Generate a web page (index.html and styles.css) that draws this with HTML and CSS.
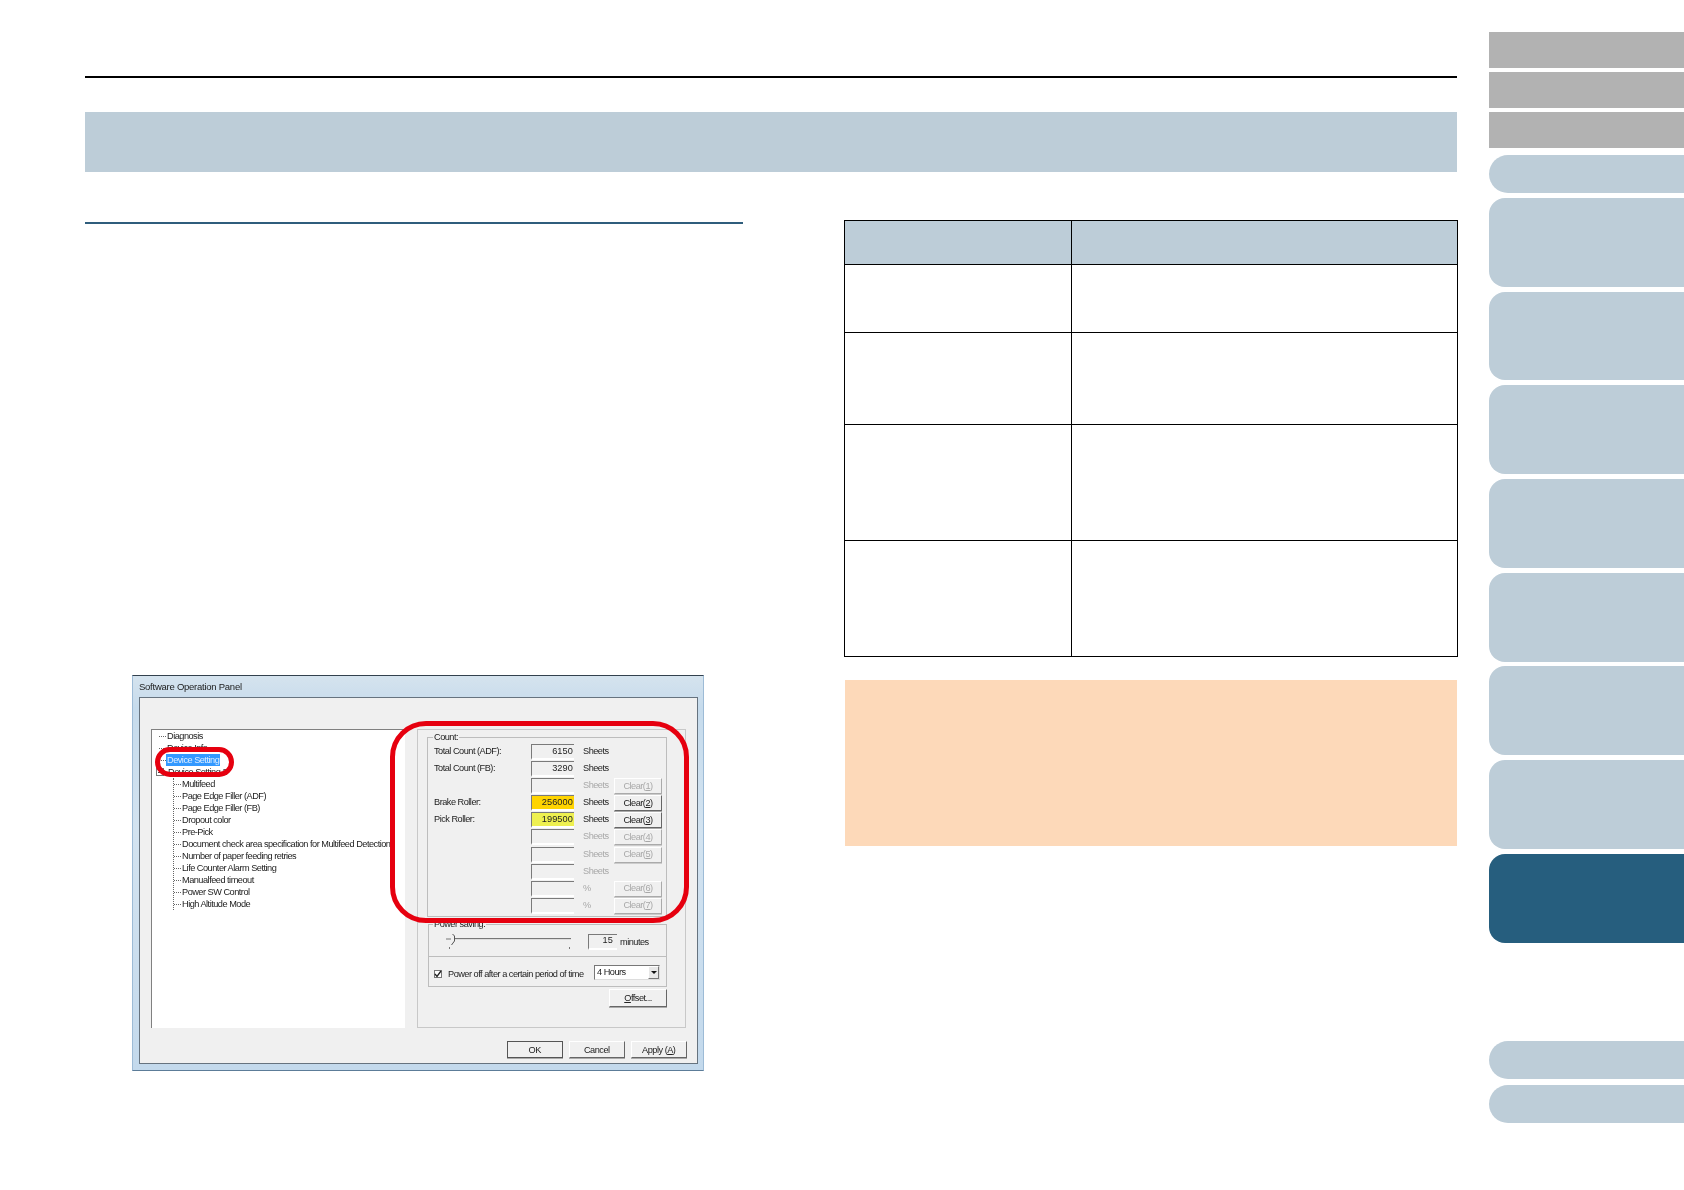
FILE: index.html
```html
<!DOCTYPE html>
<html lang="en">
<head>
<meta charset="utf-8">
<title>Software Operation Panel</title>
<link rel="stylesheet" href="styles.css">
</head>
<body>
<div class="page">
  <main class="main">
    <div class="top-rule"></div>
    <div class="band"></div>
    <div class="columns">
      <section class="left">
        <div class="sub-rule"></div>
        <div class="window">
          <div class="titlebar">Software Operation Panel</div>
          <div class="client">
            <div class="dialog-body">
              <div class="tree">
                <div class="row"><span class="stub"></span><span>Diagnosis</span></div>
                <div class="row"><span class="stub"></span><span>Device Info</span></div>
                <div class="row"><span class="stub"></span><span class="selected">Device Setting</span></div>
                <div class="row"><span class="expander"></span><span>Device Setting 2</span></div>
                <div class="subtree">
                  <div class="row"><span class="stub"></span><span>Multifeed</span></div>
                  <div class="row"><span class="stub"></span><span>Page Edge Filler (ADF)</span></div>
                  <div class="row"><span class="stub"></span><span>Page Edge Filler (FB)</span></div>
                  <div class="row"><span class="stub"></span><span>Dropout color</span></div>
                  <div class="row"><span class="stub"></span><span>Pre-Pick</span></div>
                  <div class="row"><span class="stub"></span><span>Document check area specification for Multifeed Detection</span></div>
                  <div class="row"><span class="stub"></span><span>Number of paper feeding retries</span></div>
                  <div class="row"><span class="stub"></span><span>Life Counter Alarm Setting</span></div>
                  <div class="row"><span class="stub"></span><span>Manualfeed timeout</span></div>
                  <div class="row"><span class="stub"></span><span>Power SW Control</span></div>
                  <div class="row"><span class="stub"></span><span>High Altitude Mode</span></div>
                </div>
              </div>
              <div class="panel">
                <fieldset class="group count">
                  <legend>Count:</legend>
                  <div class="count-grid">
                    <span>Total Count (ADF):</span><span class="field">6150</span><span>Sheets</span><span></span>
                    <span>Total Count (FB):</span><span class="field">3290</span><span>Sheets</span><span></span>
                    <span></span><span class="field"></span><span class="off">Sheets</span><button class="btn off">Clear(<u>1</u>)</button>
                    <span>Brake Roller:</span><span class="field amber">256000</span><span>Sheets</span><button class="btn">Clear(<u>2</u>)</button>
                    <span>Pick Roller:</span><span class="field lemon">199500</span><span>Sheets</span><button class="btn">Clear(<u>3</u>)</button>
                    <span></span><span class="field"></span><span class="off">Sheets</span><button class="btn off">Clear(<u>4</u>)</button>
                    <span></span><span class="field"></span><span class="off">Sheets</span><button class="btn off">Clear(<u>5</u>)</button>
                    <span></span><span class="field"></span><span class="off">Sheets</span><span></span>
                    <span></span><span class="field"></span><span class="off">%</span><button class="btn off">Clear(<u>6</u>)</button>
                    <span></span><span class="field"></span><span class="off">%</span><button class="btn off">Clear(<u>7</u>)</button>
                  </div>
                </fieldset>
                <fieldset class="group power">
                  <legend>Power saving:</legend>
                  <div class="power-row">
                    <svg class="slider" width="125" height="16" viewBox="0 0 125 16" aria-hidden="true">
                      <path d="M0 5h5" stroke="#777" fill="none"/>
                      <path d="M8 4.500h117" stroke="#777" fill="none"/>
                      <path d="M8 5.500h117" stroke="#ddd" fill="none"/>
                      <path d="M6.500 0l2 2v5l-3 4" stroke="#555" fill="none"/>
                      <path d="M3.500 13v2M123.500 13v2" stroke="#777" fill="none"/>
                    </svg>
                    <span class="field minutes-field">15</span>
                    <span>minutes</span>
                  </div>
                </fieldset>
                <div class="auto-off">
                  <span class="check">
                    <svg width="8" height="8" viewBox="0 0 8 8" aria-hidden="true"><path d="M1 4l2 2.500 4-5.500" stroke="#222" stroke-width="1.300" fill="none"/></svg>
                  </span>
                  <span class="auto-label">Power off after a certain period of time</span>
                  <span class="combo"><span>4 Hours</span><span class="combo-arrow"></span></span>
                </div>
                <button class="btn offset"><u>O</u>ffset...</button>
              </div>
            </div>
            <div class="footer">
              <button class="btn wide default">OK</button>
              <button class="btn wide">Cancel</button>
              <button class="btn wide">Apply (<u>A</u>)</button>
            </div>
          </div>
          <div class="mark mark-count"></div>
          <div class="mark mark-tree"></div>
        </div>
      </section>
      <section class="right">
        <table class="spec">
          <tr class="r-head"><th></th><th></th></tr>
          <tr class="r1"><td></td><td></td></tr>
          <tr class="r2"><td></td><td></td></tr>
          <tr class="r3"><td></td><td></td></tr>
          <tr class="r3"><td></td><td></td></tr>
        </table>
        <div class="note"></div>
      </section>
    </div>
  </main>
  <nav class="side">
    <div class="gray-tab"></div>
    <div class="gray-tab"></div>
    <div class="gray-tab"></div>
    <div class="tab short first"></div>
    <div class="tabs">
      <div class="tab"></div>
      <div class="tab"></div>
      <div class="tab"></div>
      <div class="tab"></div>
      <div class="tab"></div>
      <div class="tab"></div>
      <div class="tab"></div>
      <div class="tab active"></div>
    </div>
    <div class="bottom-tabs">
      <div class="tab short"></div>
      <div class="tab short"></div>
    </div>
  </nav>
</div>
</body>
</html>
```

FILE: styles.css
```css
* { box-sizing: border-box; }
html, body { margin: 0; padding: 0; background: #fff; }
.page { display: flex; width: 1684px; height: 1190px; overflow: hidden; padding-left: 85px; }
.main { width: 1372px; padding-top: 76px; flex: none; }
.top-rule { height: 2px; background: #000; }
.band { height: 60px; margin-top: 34px; background: #bdcdd8; }
.columns { display: flex; margin-top: 48px; gap: 101px; }
.left { width: 658px; padding-top: 2px; flex: none; }
.sub-rule { height: 2px; background: #2f5d7c; }
.right { width: 613px; flex: none; }

/* dialog */
.window {
  position: relative; width: 572px; height: 396px; margin: 451px 0 0 47px;
  padding: 0 5px 6px 6px; display: flex; flex-direction: column;
  background: linear-gradient(180deg, #d5e3ee 0, #c6dbec 8%, #d3e3f0 40%, #c3d9ec 100%);
  border: 1px solid #9dbbd6; border-top-color: #33414e; border-bottom-color: #5c7c98;
  font: 9.2px/12px "Liberation Sans", Arial, sans-serif; letter-spacing: -.5px; color: #222;
  filter: blur(.35px);
}
.titlebar { height: 21px; flex: none; font-size: 9.5px; line-height: 22px; letter-spacing: -.25px; color: #1c1c1c; }
.client {
  flex: 1; min-height: 0; background: #f0f0f0; border: 1px solid #66737f;
  padding: 31px 10px 0 11px; display: flex; flex-direction: column;
}
.dialog-body { display: flex; gap: 12px; height: 299px; flex: none; }
.tree { width: 254px; flex: none; background: #fff; border: solid #808080; border-width: 1px 0 0 1px; padding: 0 0 0 7px; }
.row { display: flex; align-items: center; height: 12px; white-space: nowrap; }
.stub { width: 7px; margin-right: 1px; border-top: 1px dotted #666; flex: none; }
.selected { background: #3399ff; color: #dfeeff; padding: 0 1px; margin-left: -1px; }
.expander { width: 8px; height: 8px; margin: 0 4px 0 -3px; border: 1px solid #777; flex: none; background: linear-gradient(#444, #444) center / 4px 1px no-repeat #fff; }
.subtree { margin-left: 14px; border-left: 1px dotted #666; height: 132px; }

.panel { width: 269px; flex: none; border: 1px solid #c8c8c8; padding: 2px 0 0 9px; display: flex; flex-direction: column; }
.group { margin: 0; padding: 2px 0 0 6px; border: 1px solid #bdbdbd; width: 240px; min-width: 0; }
.group legend { padding: 0 1px; margin-left: -1px; line-height: 10px; }
.count-grid { display: grid; grid-template-columns: 97px 43px 40px 48px; grid-auto-rows: 17.100px; height: 172px; align-content: start; }
.count-grid > span { line-height: 14.500px; }
.count-grid > span:nth-child(4n+3) { padding-left: 9px; }
.field {
  height: 16px; background: #f0f0f0; text-align: right; padding-right: 1px; line-height: 11px;
  border: solid #7a7a7a; border-width: 1px 0 2px 1px; border-bottom-color: #fff;
  letter-spacing: .1px;
}
.count-grid > .field { line-height: 12px; }
.amber { background: #ffd400; }
.lemon { background: #eef050; }
.off { color: #a8a8a8; }
.btn {
  width: 48px; height: 16px; padding: 0 0 1px; background: #f0f0f0; font: inherit; letter-spacing: inherit; color: #222;
  border: 1px solid; border-color: #fff #666 #666 #fff; box-shadow: 0 1px 0 #aaa;
}
.btn.off { color: #a8a8a8; border-color: #fff #aaa #aaa #fff; box-shadow: 0 1px 0 #ccc; }
.power { margin: 2px 0 0 1px; width: 239px; padding: 5px 0 6px 5px; }
.power-row { display: flex; align-items: center; height: 16px; }
.slider { flex: none; margin: 0 17px 0 12px; }
.minutes-field { width: 29px; padding-right: 4px; margin-right: 3px; }
.auto-off {
  display: flex; align-items: center; width: 239px; height: 30px; margin-left: 1px;
  border: 1px solid #bdbdbd; border-top: 0; padding: 5px 6px 0 5px;
}
.check { width: 8px; height: 8px; border: 1px solid #777; background: #fff; flex: none; margin-right: 6px; display: flex; }
.check svg { flex: none; margin: -1px; }
.auto-label { width: 146px; flex: none; white-space: nowrap; }
.combo {
  width: 66px; height: 15px; flex: none; display: flex; align-items: center; justify-content: space-between;
  background: #fff; border: 1px solid; border-color: #777 #ddd #ddd #777; padding-left: 2px; margin-top: -4px;
}
.combo-arrow { width: 11px; height: 13px; background: #e8e8e8; border: 1px solid; border-color: #fff #777 #777 #fff; display: flex; align-items: center; justify-content: center; }
.combo-arrow::before { content: ""; border: 3px solid transparent; border-top-color: #111; margin-top: 3px; }
.offset { width: 58px; height: 18px; margin: 2px 0 0 182px; padding: 0; }
.footer { display: flex; justify-content: flex-end; gap: 5.500px; margin-top: 13px; }
.wide { width: 56.500px; height: 17px; padding: 0; }
.default { border-color: #555; }
.mark { position: absolute; border: 5px solid #e6000f; pointer-events: none; }
.mark-count { left: 257px; top: 45px; width: 299px; height: 202px; border-radius: 36px; }
.mark-tree { left: 22px; top: 71px; width: 79px; height: 30px; border-radius: 15px; }

/* right column */
.spec { width: 614px; height: 436px; border-collapse: collapse; table-layout: fixed; }
.spec th, .spec td { border: 1.5px solid #000; padding: 0; }
.spec th:first-child, .spec td:first-child { width: 227px; }
.spec th { background: #bdcdd8; }
.r-head { height: 44px; }
.r1 { height: 68px; }
.r2 { height: 92px; }
.r3 { height: 116px; }
.note { height: 166px; margin: 23px 0 0 1px; width: 612px; background: #fdd9b9; }

/* sidebar */
.side { width: 195px; flex: none; margin-left: 32px; padding-top: 32px; display: flex; flex-direction: column; }
.gray-tab { height: 36px; margin-bottom: 4px; background: #b2b2b2; }
.tab { height: 88.800px; background: #bdcdd8; border-radius: 16px 0 0 16px; }
.tab.short { height: 38px; border-radius: 19px 0 0 19px; }
.tab.first { margin-top: 3px; }
.tabs { display: flex; flex-direction: column; gap: 4.900px; margin-top: 5px; }
.active { background: #265e7e; }
.bottom-tabs { display: flex; flex-direction: column; gap: 6px; margin-top: 98px; }
```
